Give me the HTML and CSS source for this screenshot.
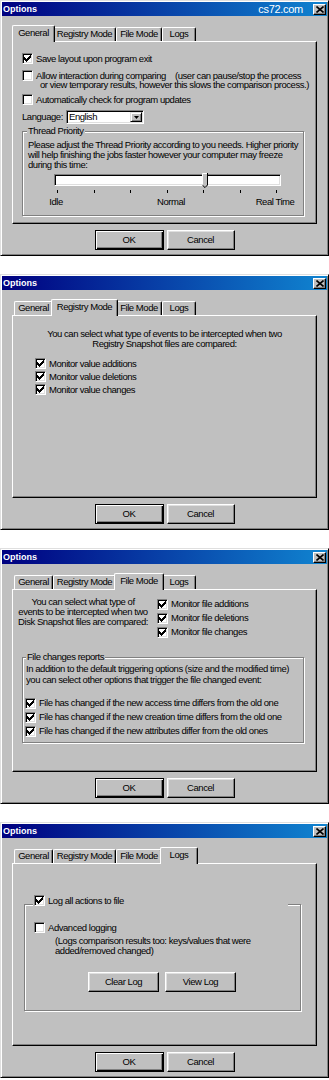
FILE: index.html
```html
<!DOCTYPE html>
<html lang="en">

<head>
    <meta charset="UTF-8">
    <meta name="viewport" content="width=device-width, initial-scale=1.0">
    <title>Options</title>
    <link rel="stylesheet" href="styles.css">
</head>

<body>
    <div class="stack">

        <!-- General tab -->
        <div class="dialog">
            <div class="titlebar">
                <span class="title">Options</span>
                <span class="brand">cs72.com</span>
                <span class="close"><svg width="8" height="7" viewBox="0 0 8 7"><path d="M0.5 0.5L7.5 6.5M7.5 0.5L0.5 6.5" stroke="#000" stroke-width="1.6"/></svg></span>
            </div>
            <div class="body">
                <div class="tabs">
                    <div class="tab tab-general active">General</div>
                    <div class="tab tab-registry">Registry Mode</div>
                    <div class="tab tab-file">File Mode</div>
                    <div class="tab tab-logs">Logs</div>
                </div>
                <div class="panel general">
                    <div class="check">
                        <span class="box"><svg class="tick" viewBox="0 0 7 7"><path d="M0 2h1v3H0zM1 3h1v3H1zM2 4h1v3H2zM3 3h1v3H3zM4 2h1v3H4zM5 1h1v3H5zM6 0h1v3H6z"/></svg></span>
                        <span>Save layout upon program exit</span>
                    </div>
                    <div class="check allow">
                        <span class="box"></span>
                        <span class="allow-label">Allow interaction during comparing</span>
                        <span>(user can pause/stop the process</span>
                    </div>
                    <div class="note-line">or view temporary results, however this slows the comparison process.)</div>
                    <div class="check auto">
                        <span class="box"></span>
                        <span>Automatically check for program updates</span>
                    </div>
                    <div class="lang-row">
                        <span class="lang-label">Language:</span>
                        <div class="combo">
                            <span class="combo-text">English</span>
                            <span class="combo-btn"><svg width="5" height="3" viewBox="0 0 5 3"><path d="M0 0H5L2.5 3Z"/></svg></span>
                        </div>
                    </div>
                    <div class="group priority">
                        <div class="group-title">Thread Priority</div>
                        <div class="group-text">Please adjust the Thread Priority according to you needs. Higher priority<br>will help finishing the jobs faster however your computer may freeze<br>during this time:</div>
                        <div class="track">
                            <svg class="thumb" width="6" height="16" viewBox="0 0 6 16">
                                <path d="M0 0H6V12L3 15L0 12Z" fill="#c0c0c0"/>
                                <path d="M0.5 12V0.5H5" stroke="#fff" fill="none"/>
                                <path d="M5.5 0V12L3 14.6L0.5 12.2" stroke="#000" fill="none"/>
                            </svg>
                        </div>
                        <div class="ticks"><i></i><i></i><i></i><i></i><i></i><i></i><i></i></div>
                        <div class="tick-labels">
                            <span class="lbl-idle">Idle</span>
                            <span class="lbl-normal">Normal</span>
                            <span class="lbl-real">Real Time</span>
                        </div>
                    </div>
                </div>
                <div class="buttons">
                    <div class="btn btn-default">OK</div>
                    <div class="btn">Cancel</div>
                </div>
            </div>
        </div>

        <!-- Registry Mode tab -->
        <div class="dialog">
            <div class="titlebar">
                <span class="title">Options</span>
                <span class="close"><svg width="8" height="7" viewBox="0 0 8 7"><path d="M0.5 0.5L7.5 6.5M7.5 0.5L0.5 6.5" stroke="#000" stroke-width="1.6"/></svg></span>
            </div>
            <div class="body">
                <div class="tabs">
                    <div class="tab tab-general">General</div>
                    <div class="tab tab-registry active">Registry Mode</div>
                    <div class="tab tab-file">File Mode</div>
                    <div class="tab tab-logs">Logs</div>
                </div>
                <div class="panel registry">
                    <div class="registry-intro">You can select what type of events to be intercepted when two<br>Registry Snapshot files are compared:</div>
                    <div class="registry-list">
                        <div class="check">
                            <span class="box"><svg class="tick" viewBox="0 0 7 7"><path d="M0 2h1v3H0zM1 3h1v3H1zM2 4h1v3H2zM3 3h1v3H3zM4 2h1v3H4zM5 1h1v3H5zM6 0h1v3H6z"/></svg></span>
                            <span>Monitor value additions</span>
                        </div>
                        <div class="check">
                            <span class="box"><svg class="tick" viewBox="0 0 7 7"><path d="M0 2h1v3H0zM1 3h1v3H1zM2 4h1v3H2zM3 3h1v3H3zM4 2h1v3H4zM5 1h1v3H5zM6 0h1v3H6z"/></svg></span>
                            <span>Monitor value deletions</span>
                        </div>
                        <div class="check">
                            <span class="box"><svg class="tick" viewBox="0 0 7 7"><path d="M0 2h1v3H0zM1 3h1v3H1zM2 4h1v3H2zM3 3h1v3H3zM4 2h1v3H4zM5 1h1v3H5zM6 0h1v3H6z"/></svg></span>
                            <span>Monitor value changes</span>
                        </div>
                    </div>
                </div>
                <div class="buttons">
                    <div class="btn btn-default">OK</div>
                    <div class="btn">Cancel</div>
                </div>
            </div>
        </div>

        <!-- File Mode tab -->
        <div class="dialog">
            <div class="titlebar">
                <span class="title">Options</span>
                <span class="close"><svg width="8" height="7" viewBox="0 0 8 7"><path d="M0.5 0.5L7.5 6.5M7.5 0.5L0.5 6.5" stroke="#000" stroke-width="1.6"/></svg></span>
            </div>
            <div class="body">
                <div class="tabs">
                    <div class="tab tab-general">General</div>
                    <div class="tab tab-registry">Registry Mode</div>
                    <div class="tab tab-file active">File Mode</div>
                    <div class="tab tab-logs">Logs</div>
                </div>
                <div class="panel filemode">
                    <div class="file-top">
                        <div class="file-intro">You can select what type of<br>events to be intercepted when two<br>Disk Snapshot files are compared:</div>
                        <div class="file-checks">
                            <div class="check">
                                <span class="box"><svg class="tick" viewBox="0 0 7 7"><path d="M0 2h1v3H0zM1 3h1v3H1zM2 4h1v3H2zM3 3h1v3H3zM4 2h1v3H4zM5 1h1v3H5zM6 0h1v3H6z"/></svg></span>
                                <span>Monitor file additions</span>
                            </div>
                            <div class="check">
                                <span class="box"><svg class="tick" viewBox="0 0 7 7"><path d="M0 2h1v3H0zM1 3h1v3H1zM2 4h1v3H2zM3 3h1v3H3zM4 2h1v3H4zM5 1h1v3H5zM6 0h1v3H6z"/></svg></span>
                                <span>Monitor file deletions</span>
                            </div>
                            <div class="check">
                                <span class="box"><svg class="tick" viewBox="0 0 7 7"><path d="M0 2h1v3H0zM1 3h1v3H1zM2 4h1v3H2zM3 3h1v3H3zM4 2h1v3H4zM5 1h1v3H5zM6 0h1v3H6z"/></svg></span>
                                <span>Monitor file changes</span>
                            </div>
                        </div>
                    </div>
                    <div class="group file-group">
                        <div class="group-title">File changes reports</div>
                        <div class="file-group-text">In addition to the default triggering options (size and the modified time)<br>you can select other options that trigger the file changed event:</div>
                        <div class="file-group-checks">
                            <div class="check">
                                <span class="box"><svg class="tick" viewBox="0 0 7 7"><path d="M0 2h1v3H0zM1 3h1v3H1zM2 4h1v3H2zM3 3h1v3H3zM4 2h1v3H4zM5 1h1v3H5zM6 0h1v3H6z"/></svg></span>
                                <span>File has changed if the new access time differs from the old one</span>
                            </div>
                            <div class="check">
                                <span class="box"><svg class="tick" viewBox="0 0 7 7"><path d="M0 2h1v3H0zM1 3h1v3H1zM2 4h1v3H2zM3 3h1v3H3zM4 2h1v3H4zM5 1h1v3H5zM6 0h1v3H6z"/></svg></span>
                                <span>File has changed if the new creation time differs from the old one</span>
                            </div>
                            <div class="check">
                                <span class="box"><svg class="tick" viewBox="0 0 7 7"><path d="M0 2h1v3H0zM1 3h1v3H1zM2 4h1v3H2zM3 3h1v3H3zM4 2h1v3H4zM5 1h1v3H5zM6 0h1v3H6z"/></svg></span>
                                <span>File has changed if the new attributes differ from the old ones</span>
                            </div>
                        </div>
                    </div>
                </div>
                <div class="buttons">
                    <div class="btn btn-default">OK</div>
                    <div class="btn">Cancel</div>
                </div>
            </div>
        </div>

        <!-- Logs tab -->
        <div class="dialog">
            <div class="titlebar">
                <span class="title">Options</span>
                <span class="close"><svg width="8" height="7" viewBox="0 0 8 7"><path d="M0.5 0.5L7.5 6.5M7.5 0.5L0.5 6.5" stroke="#000" stroke-width="1.6"/></svg></span>
            </div>
            <div class="body">
                <div class="tabs">
                    <div class="tab tab-general">General</div>
                    <div class="tab tab-registry">Registry Mode</div>
                    <div class="tab tab-file">File Mode</div>
                    <div class="tab tab-logs active">Logs</div>
                </div>
                <div class="panel logs">
                    <div class="group log-group">
                        <div class="check log-title">
                            <span class="box"><svg class="tick" viewBox="0 0 7 7"><path d="M0 2h1v3H0zM1 3h1v3H1zM2 4h1v3H2zM3 3h1v3H3zM4 2h1v3H4zM5 1h1v3H5zM6 0h1v3H6z"/></svg></span>
                            <span>Log all actions to file</span>
                        </div>
                        <div class="check adv">
                            <span class="box"></span>
                            <span>Advanced logging</span>
                        </div>
                        <div class="adv-note">(Logs comparison results too: keys/values that were<br>added/removed changed)</div>
                        <div class="log-buttons">
                            <div class="btn">Clear Log</div>
                            <div class="btn">View Log</div>
                        </div>
                    </div>
                </div>
                <div class="buttons">
                    <div class="btn btn-default">OK</div>
                    <div class="btn">Cancel</div>
                </div>
            </div>
        </div>

    </div>
</body>

</html>
```

FILE: styles.css
```css
body {
    margin: 0;
    background-color: #ffffff;
    font-family: "Liberation Sans", Arial, sans-serif;
    font-size: 9.5px;
    line-height: 10px;
    letter-spacing: -0.45px;
    color: #000000;
}

.stack {
    display: flex;
    flex-direction: column;
    gap: 18px;
}

/* window frame */
.dialog {
    width: 329px;
    height: 256px;
    box-sizing: border-box;
    background-color: #c0c0c0;
    border: 1px solid;
    border-color: #dfdfdf #000000 #000000 #dfdfdf;
    box-shadow: inset 1px 1px #ffffff, inset -1px -1px #808080;
    padding: 1px;
    white-space: nowrap;
}

.titlebar {
    height: 14px;
    display: flex;
    align-items: center;
    padding: 0 1px;
    background: linear-gradient(90deg, #000080, #1084d0);
    color: #ffffff;
}

.title {
    font-size: 9px;
    font-weight: bold;
    letter-spacing: 0;
}

.brand {
    margin-left: auto;
    margin-right: 10px;
    font-size: 11px;
    line-height: 12px;
    letter-spacing: -0.3px;
}

.close {
    width: 13px;
    height: 11px;
    box-sizing: border-box;
    margin-left: auto;
    display: flex;
    align-items: center;
    justify-content: center;
    background-color: #c0c0c0;
    border: 1px solid;
    border-color: #ffffff #000000 #000000 #ffffff;
    box-shadow: inset -1px -1px #808080;
}

.brand + .close {
    margin-left: 0;
}

.body {
    padding: 9px 10px 0;
}

/* tabs */
.tabs {
    display: flex;
    align-items: flex-end;
    height: 16px;
    padding-left: 2px;
}

.tab {
    box-sizing: border-box;
    flex: none;
    height: 14px;
    padding-top: 1px;
    text-align: center;
    border-top: 1px solid #ffffff;
    border-left: 1px solid #ffffff;
    border-right: 1px solid #000000;
    border-radius: 2px 2px 0 0;
    box-shadow: inset -1px 0 #808080;
}

.tab.active {
    height: 17px;
    margin: 0 -2px -1px;
    padding-top: 2px;
    position: relative;
    z-index: 1;
    background-color: #c0c0c0;
}

.tab-general { width: 39px; }
.tab-registry { width: 63px; }
.tab-file { width: 46px; }
.tab-logs { width: 34px; }

.tab-general.active { width: 43px; }
.tab-registry.active { width: 67px; }
.tab-file.active { width: 50px; }
.tab-logs.active { width: 38px; }

.panel {
    box-sizing: border-box;
    height: 183px;
    border: 1px solid;
    border-color: #ffffff #000000 #000000 #ffffff;
    box-shadow: inset -1px -1px #808080;
}

/* push buttons */
.buttons {
    display: flex;
    justify-content: center;
    gap: 3px;
    margin-top: 6px;
}

.btn {
    box-sizing: border-box;
    width: 68px;
    height: 20px;
    display: flex;
    align-items: center;
    justify-content: center;
    padding-bottom: 1px;
    border: 1px solid;
    border-color: #ffffff #000000 #000000 #ffffff;
    box-shadow: inset -1px -1px #808080, inset 1px 1px #dfdfdf;
}

.btn-default {
    width: 69px;
    border-color: #000000;
    box-shadow: inset 1px 1px #ffffff, inset -1px -1px #000000, inset -2px -2px #808080;
}

/* check boxes */
.check {
    display: flex;
    align-items: center;
    gap: 3px;
    height: 11px;
}

.box {
    width: 11px;
    height: 11px;
    box-sizing: border-box;
    flex: none;
    display: flex;
    align-items: center;
    justify-content: center;
    background-color: #ffffff;
    border: 1px solid;
    border-color: #808080 #ffffff #ffffff #808080;
    box-shadow: inset 1px 1px #000000, inset -1px -1px #dfdfdf;
}

.tick {
    width: 7px;
    height: 7px;
    shape-rendering: crispEdges;
}

/* etched group frame */
.group {
    box-sizing: border-box;
    border: 1px solid #808080;
    box-shadow: inset 1px 1px #ffffff, 1px 1px #ffffff;
}

.group-title {
    width: fit-content;
    margin: -6px 0 0 -1px;
    padding: 0 1px;
    background-color: #c0c0c0;
}

/* general */
.general {
    padding: 11px 0 0 9px;
}

.allow {
    margin-top: 6px;
}

.allow-label {
    width: 136px;
}

.note-line {
    margin: -1px 0 0 18px;
}

.auto {
    margin-top: 4px;
}

.lang-row {
    display: flex;
    align-items: center;
    height: 14px;
    margin-top: 5px;
}

.lang-label {
    width: 44px;
}

.combo {
    box-sizing: border-box;
    width: 78px;
    height: 14px;
    display: flex;
    padding: 1px;
    background-color: #ffffff;
    border: 1px solid;
    border-color: #808080 #ffffff #ffffff #808080;
    box-shadow: inset 1px 1px #000000, inset -1px -1px #dfdfdf;
}

.combo-text {
    flex: 1;
    padding-left: 1px;
}

.combo-btn {
    box-sizing: border-box;
    width: 12px;
    height: 10px;
    display: flex;
    align-items: center;
    justify-content: center;
    background-color: #c0c0c0;
    border: 1px solid;
    border-color: #dfdfdf #000000 #000000 #dfdfdf;
    box-shadow: inset 1px 1px #ffffff, inset -1px -1px #808080;
}

.priority {
    width: 282px;
    margin-top: 7px;
    padding: 0 0 8px 5px;
}

.group-text {
    margin-top: 4px;
}

.track {
    position: relative;
    box-sizing: border-box;
    width: 227px;
    height: 12px;
    margin: 4px 0 0 26px;
    background-color: #ffffff;
    border: 1px solid;
    border-color: #808080 #ffffff #ffffff #808080;
    box-shadow: inset 1px 1px #000000, inset -1px -1px #dfdfdf;
}

.thumb {
    position: absolute;
    left: 147px;
    top: -2px;
}

.ticks {
    display: flex;
    justify-content: space-between;
    width: 220px;
    height: 3px;
    margin: 4px 0 0 29px;
}

.ticks i {
    width: 1px;
    background-color: #000000;
}

.tick-labels {
    display: flex;
    margin-top: 4px;
}

.tick-labels span {
    width: 40px;
    text-align: center;
}

.lbl-idle { margin-left: 8px; }
.lbl-normal { margin-left: 75px; }
.lbl-real { margin-left: 64px; }

/* registry mode */
.registry {
    padding-top: 13px;
}

.registry-intro {
    text-align: center;
}

.registry-list {
    margin: 8px 0 0 22px;
}

.registry-list .check {
    height: 13px;
}

/* file mode */
.filemode {
    padding: 7px 0 0 9px;
}

.file-top {
    display: flex;
    margin-left: -9px;
}

.file-intro {
    width: 140px;
    text-align: center;
}

.file-checks {
    margin-left: 4px;
}

.file-checks .check {
    height: 14px;
}

.file-group {
    width: 282px;
    margin-top: 18px;
    padding: 0 0 4px 3px;
}

.file-group .group-title {
    margin-left: 0;
}

.file-group-text {
    margin-top: 1px;
    line-height: 11px;
}

.file-group-checks {
    margin: 11px 0 0 -1px;
}

.file-group-checks .check {
    height: 14px;
}

/* logs */
.logs {
    padding-left: 11px;
}

.log-group {
    width: 277px;
    margin-top: 40px;
    padding-bottom: 18px;
}

.log-title {
    width: 255px;
    height: 13px;
    box-sizing: border-box;
    align-items: flex-start;
    margin: -10px 0 0 8px;
    padding-left: 1px;
    line-height: 11px;
    background-color: #c0c0c0;
}

.adv {
    margin: 14px 0 0 9px;
}

.adv-note {
    margin: 3px 0 0 30px;
}

.log-buttons {
    display: flex;
    gap: 6px;
    margin: 16px 0 0 63px;
}

.log-buttons .btn {
    width: 71px;
}
```
